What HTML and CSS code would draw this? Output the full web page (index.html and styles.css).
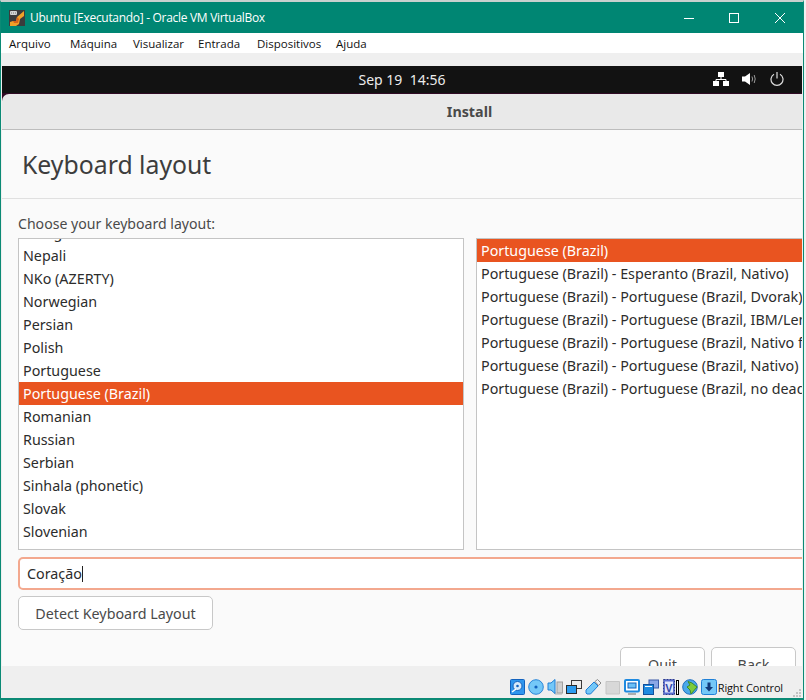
FILE: index.html
```html
<!DOCTYPE html>
<html lang="pt-br">
<head>
    <meta charset="UTF-8">
    <title>Ubuntu [Executando] - Oracle VM VirtualBox</title>
    <link rel="stylesheet" href="styles.css">
</head>
<body>
    <div class="window">
        <div class="titlebar">
            <svg class="app-icon" width="16" height="16" viewBox="0 0 16 16">
                <rect width="16" height="16" fill="#3b3b3d"/>
                <path d="M1 16 V12 L4 11 H7 L8 7 L15 1 V6 L11 9 L10 14 L7 16 Z" fill="#f0a028"/>
                <path d="M4 11 H7 L8 7 L10 9 L9 13 H5 Z" fill="#d8641c"/>
                <rect x="1" y="1" width="7" height="4" rx="1" fill="#d4d4d4"/>
                <path d="M2 3 H7" stroke="#777" stroke-dasharray="1 1"/>
            </svg>
            <span class="title">Ubuntu [Executando] - Oracle VM VirtualBox</span>
            <div class="win-buttons">
                <svg width="12" height="12" viewBox="0 0 12 12"><path d="M2 6.5 H12" stroke="#fff" fill="none"/></svg>
                <svg width="12" height="12" viewBox="0 0 12 12"><rect x="1.5" y="1.5" width="9" height="9" stroke="#fff" fill="none"/></svg>
                <svg width="12" height="12" viewBox="0 0 12 12"><path d="M1 1 L11 11 M11 1 L1 11" stroke="#fff" fill="none"/></svg>
            </div>
        </div>
        <div class="menubar">
            <span class="menu-item m1">Arquivo</span>
            <span class="menu-item m2">Máquina</span>
            <span class="menu-item m3">Visualizar</span>
            <span class="menu-item m4">Entrada</span>
            <span class="menu-item m5">Dispositivos</span>
            <span class="menu-item">Ajuda</span>
        </div>
        <div class="screen">
            <div class="panel">
                <span class="clock">Sep 19&nbsp;&nbsp;14:56</span>
                <div class="tray">
                    <svg width="16" height="14" viewBox="0 0 16 14"><path d="M5 0 H11 V5 H5 Z M0 9 H6 V14 H0 Z M10 9 H16 V14 H10 Z" fill="#fff"/><path d="M8 4 V7.5 M3 10 V7.5 H13 V10" stroke="#fff" fill="none"/></svg>
                    <svg width="15" height="14" viewBox="0 0 15 14"><path d="M0 4.5 H3 L8 1 V13 L3 9.5 H0 Z" fill="#fff"/><path d="M10 4.5 Q11.2 7 10 9.5 M12.2 3 Q14.2 7 12.2 11" stroke="#999" fill="none"/></svg>
                    <svg width="14" height="14" viewBox="0 0 14 14"><path d="M7 0 V6.5 M4 2.2 A6 6 0 1 0 10 2.2" stroke="#ddd" stroke-width="1.2" fill="none"/></svg>
                </div>
            </div>
            <div class="installer">
                <div class="header">Install</div>
                <div class="content">
                    <h1>Keyboard layout</h1>
                    <div class="main">
                        <p class="prompt">Choose your keyboard layout:</p>
                        <div class="lists">
                            <ul class="list list-left">
                                <li class="clipped">Mongolian</li>
                                <li>Nepali</li>
                                <li>NKo (AZERTY)</li>
                                <li>Norwegian</li>
                                <li>Persian</li>
                                <li>Polish</li>
                                <li>Portuguese</li>
                                <li class="selected">Portuguese (Brazil)</li>
                                <li>Romanian</li>
                                <li>Russian</li>
                                <li>Serbian</li>
                                <li>Sinhala (phonetic)</li>
                                <li>Slovak</li>
                                <li>Slovenian</li>
                                <li>Spanish</li>
                            </ul>
                            <ul class="list list-right">
                                <li class="selected">Portuguese (Brazil)</li>
                                <li>Portuguese (Brazil) - Esperanto (Brazil, Nativo)</li>
                                <li>Portuguese (Brazil) - Portuguese (Brazil, Dvorak)</li>
                                <li>Portuguese (Brazil) - Portuguese (Brazil, IBM/Lenovo ThinkPad)</li>
                                <li>Portuguese (Brazil) - Portuguese (Brazil, Nativo for US keyboards)</li>
                                <li>Portuguese (Brazil) - Portuguese (Brazil, Nativo)</li>
                                <li>Portuguese (Brazil) - Portuguese (Brazil, no dead keys)</li>
                            </ul>
                        </div>
                        <div class="type-box">Coração<span class="caret"></span></div>
                        <button class="btn detect">Detect Keyboard Layout</button>
                    </div>
                    <div class="actions">
                        <button class="btn nav">Quit</button>
                        <button class="btn nav">Back</button>
                    </div>
                </div>
            </div>
        </div>
        <div class="statusbar">
            <!-- hard disk -->
            <svg class="st" width="15" height="16" viewBox="0 0 15 16"><rect x="0.5" y="0.5" width="14" height="15" rx="1" fill="#2f96ee" stroke="#1362bd"/><circle cx="7.5" cy="7" r="4.5" fill="#d7ebfb" stroke="#1362bd"/><circle cx="7.5" cy="7" r="1.3" fill="#1362bd"/><path d="M2 13 L6 10" stroke="#fff" stroke-width="1.5"/></svg>
            <!-- optical -->
            <svg class="st" width="16" height="16" viewBox="0 0 16 16"><circle cx="8" cy="8" r="7.3" fill="#74c8f8" stroke="#2a86d8"/><circle cx="8" cy="8" r="1.6" fill="#1362bd"/></svg>
            <!-- audio -->
            <svg class="st" width="16" height="16" viewBox="0 0 16 16"><rect x="10" y="3" width="5.5" height="11" fill="#d0d0d0" stroke="#a0a0a0"/><path d="M8 13 V15 H15" stroke="#b0b0b0" fill="none"/><path d="M1 4 H4 L8 0.5 V14.5 L4 11 H1 Z" fill="#74c8f8" stroke="#1f7fd6"/></svg>
            <!-- network -->
            <svg class="st" width="16" height="16" viewBox="0 0 16 16"><rect x="5.5" y="1.5" width="10" height="8" fill="#ececec" stroke="#3a3a3a"/><rect x="0.5" y="6.5" width="10" height="8" fill="#2b9cf0" stroke="#2a2a2a"/></svg>
            <!-- usb -->
            <svg class="st" width="17" height="16" viewBox="0 0 17 16"><path d="M1 11 L9 3 L13 7 L5.5 15 H2 L1 14 Z" fill="#74c8f8" stroke="#1f7fd6"/><path d="M10 2.5 L12.5 0.5 L16 4 L13.5 6.5 Z" fill="#f0f0f0" stroke="#8a8a8a"/></svg>
            <!-- shared folder -->
            <svg class="st" width="16" height="16" viewBox="0 0 16 16"><path d="M1 2.5 H14.5 V15 H1 Z" fill="#d8d8d8" stroke="#c6c6c6"/></svg>
            <!-- display -->
            <svg class="st" width="16" height="16" viewBox="0 0 16 16"><rect x="1" y="1" width="14" height="11.5" rx="1" fill="#fff" stroke="#1f8ae0" stroke-width="2"/><rect x="4" y="4" width="8" height="5" fill="#6cc0f6" stroke="#1362bd"/><path d="M4 15 H12" stroke="#999" stroke-width="1.5"/></svg>
            <!-- capture -->
            <svg class="st" width="16" height="16" viewBox="0 0 16 16"><rect x="6" y="1" width="9.5" height="8" fill="#8aa6e6" stroke="#3c5aa8"/><rect x="0.5" y="5.5" width="10" height="10" fill="#1f8ae0" stroke="#124f9a"/><path d="M2 7.5 H9" stroke="#fff"/></svg>
            <!-- vt-x -->
            <svg class="st st-v" width="12" height="16" viewBox="0 0 12 16"><rect x="0.5" y="0.5" width="11" height="15" fill="#5a6fd0" stroke="#2c3a90" stroke-dasharray="2 1"/><rect x="2" y="2.5" width="8" height="11" fill="#dfe6fb"/><text x="2.3" y="12.5" font-family="Liberation Sans" font-size="11" font-weight="bold" fill="#3246a8">V</text></svg>
            <span class="st-bar"></span>
            <!-- guest additions -->
            <svg class="st" width="16" height="16" viewBox="0 0 16 16"><circle cx="8" cy="8" r="7.3" fill="#4aa8ea" stroke="#1f6fc0"/><path d="M6 2.5 L10 4 L15 8 L9 15 L8 11 L5 8 L8 6 Z" fill="#7ccc3c" stroke="#3c8a2c"/></svg>
            <!-- mouse integration -->
            <svg class="st" width="16" height="16" viewBox="0 0 16 16"><rect x="0.5" y="0.5" width="15" height="15" rx="2" fill="#74c8f8" stroke="#1f7fd6"/><path d="M6.5 3.5 H9.5 V8 H12 L8 12.5 L4 8 H6.5 Z" fill="#123a7a"/></svg>
            <span class="host-key">Right Control</span>
            <svg class="grip" width="9" height="9" viewBox="0 0 9 9"><path d="M7 1 h2 v2 h-2 Z M4 4 h2 v2 h-2 Z M7 4 h2 v2 h-2 Z M1 7 h2 v2 h-2 Z M4 7 h2 v2 h-2 Z M7 7 h2 v2 h-2 Z" fill="#c4c4c4"/></svg>
        </div>
    </div>
</body>
</html>
```
FILE: styles.css
```css
html, body {
    margin: 0;
    height: 700px;
    overflow: hidden;
    background-color: #f0f0f0;
}
.window {
    height: 700px;
    margin-right: 2px;
    border-top: 2px solid #c8d0ce;
    border-left: 1px solid #0b8a75;
    border-right: 1px solid #0b8a75;
    border-bottom: 2px solid #0b8a75;
    box-sizing: border-box;
    display: flex;
    flex-direction: column;
    overflow: hidden;
    font-family: "Noto Sans", sans-serif;
}
.titlebar {
    height: 31px;
    flex: none;
    background-color: #008673;
    color: #fff;
    display: flex;
    align-items: center;
    padding-left: 8px;
    font-family: "Open Sans", sans-serif;
    font-size: 12px;
    letter-spacing: -0.3px;
}
.app-icon {
    margin-right: 5px;
}
.win-buttons {
    margin-left: auto;
    display: flex;
    gap: 34px;
    padding-right: 17px;
}
.menubar {
    height: 20px;
    flex: none;
    background-color: #fff;
    display: flex;
    align-items: center;
    padding-left: 8px;
    font-family: "Open Sans", sans-serif;
    font-size: 11.5px;
    color: #111;
}
.m1 { width: 61px; }
.m2 { width: 63px; }
.m3 { width: 65px; }
.m4 { width: 59px; }
.m5 { width: 79px; }
.screen {
    flex: 1;
    min-height: 0;
    background-color: #efefef;
    padding: 13px 0 0 1px;
    display: flex;
    flex-direction: column;
}
.panel {
    height: 27px;
    flex: none;
    background-color: #121212;
    color: #ebebeb;
    position: relative;
    display: flex;
    align-items: center;
    justify-content: center;
    font-size: 14px;
    margin-right: 1px;
}
.tray {
    position: absolute;
    right: 18px;
    top: 6px;
    display: flex;
    gap: 13px;
}
.installer {
    flex: 1;
    min-height: 0;
    display: flex;
    flex-direction: column;
    margin-right: 1px;
    background-color: #300a24;
}
.header {
    height: 36px;
    flex: none;
    margin-top: 1px;
    box-sizing: border-box;
    background-color: #e9e9e9;
    border-bottom: 1px solid #bdbdbd;
    border-top-left-radius: 7px;
    font-size: 14.3px;
    font-weight: bold;
    color: #4a4a4a;
    text-align: center;
    line-height: 35px;
    padding-left: 135px;
}
.content {
    flex: 1;
    min-height: 0;
    background-color: #fafafa;
    overflow: hidden;
}
h1 {
    margin: 0;
    height: 69px;
    box-sizing: border-box;
    border-bottom: 1px solid #e0e0e0;
    padding: 18px 0 0 20px;
    font-size: 24.8px;
    line-height: 33px;
    font-weight: normal;
    color: #3d3d3d;
}
.main {
    padding: 0 0 0 16px;
}
.prompt {
    margin: 0;
    padding-top: 15px;
    height: 39px;
    box-sizing: border-box;
    font-size: 14.1px;
    line-height: 20px;
    color: #4a4a4a;
}
.lists {
    display: flex;
    gap: 12px;
    width: 800px;
}
.list {
    margin: 0;
    padding: 0;
    list-style: none;
    height: 312px;
    box-sizing: border-box;
    background-color: #fff;
    border: 1px solid #c4c4c4;
    overflow: hidden;
    font-size: 14.3px;
    color: #2c2c2c;
}
.list-left {
    width: 446px;
    flex: none;
}
.list-right {
    flex: 1;
}
.list li {
    height: 23px;
    line-height: 23px;
    padding-left: 4px;
    white-space: nowrap;
}
.list li.clipped {
    margin-top: -18px;
}
.list li.selected {
    background-color: #e95420;
    color: #fff;
}
.type-box {
    margin-top: 7px;
    width: 800px;
    height: 33px;
    box-sizing: border-box;
    background-color: #fff;
    border: 2px solid #f3a88e;
    border-radius: 5px;
    padding-left: 7px;
    font-size: 14.3px;
    line-height: 29px;
    color: #2c2c2c;
}
.caret {
    display: inline-block;
    width: 1px;
    height: 16px;
    background-color: #222;
    vertical-align: -3px;
}
.btn {
    height: 34px;
    box-sizing: border-box;
    background-color: #fff;
    border: 1px solid #c8c8c8;
    border-radius: 5px;
    font-family: "Noto Sans", sans-serif;
    font-size: 14.3px;
    color: #4a4a4a;
}
.detect {
    display: block;
    margin-top: 6px;
    width: 195px;
    padding: 0;
}
.actions {
    display: flex;
    justify-content: flex-end;
    gap: 6px;
    padding: 17px 6px 0 0;
}
.nav {
    width: 85px;
    flex: none;
}
.statusbar {
    height: 32px;
    flex: none;
    box-sizing: border-box;
    padding: 13px 2px 0 0;
    background-color: #efefef;
    display: flex;
    align-items: flex-start;
    justify-content: flex-end;
    gap: 3px;
    font-family: "Open Sans", sans-serif;
    font-size: 11px;
    letter-spacing: -0.15px;
    color: #111;
}
.st-v {
    margin-left: 1px;
}
.st-bar {
    width: 3px;
    height: 15px;
    box-sizing: border-box;
    margin: 1px 0 0 -2px;
    border: 1px solid #000;
    background-color: #fff;
}
.host-key {
    line-height: 18px;
    margin-left: -2px;
    margin-right: 6px;
}
.grip {
    margin-top: 9px;
}
```
